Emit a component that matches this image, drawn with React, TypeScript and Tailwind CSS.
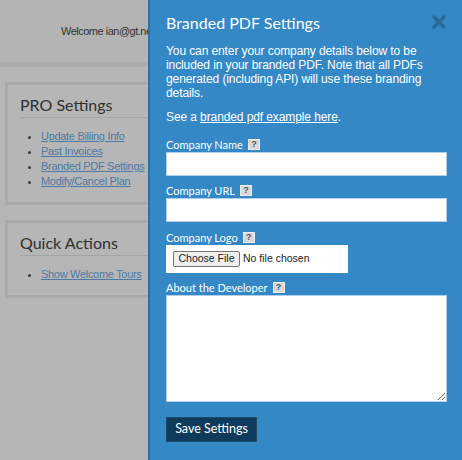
import { X } from "lucide-react";

const proLinks = ["Update Billing Info", "Past Invoices", "Branded PDF Settings", "Modify/Cancel Plan"];

function Help() {
    return (
        <span className="ml-[5px] inline-flex h-[11px] w-[12px] items-center justify-center border border-[#ececec] bg-[#d9d9d9] font-['Liberation_Sans',sans-serif] text-[9px] font-bold leading-none text-[#555]">
            ?
        </span>
    );
}

function Label({ text }: { text: string }) {
    return (
        <div className="flex h-[15px] items-center font-['Lato',sans-serif] text-[11px] leading-[15px] text-white">
            {text}
            <Help />
        </div>
    );
}

function Box({ title, links }: { title: string; links: string[] }) {
    return (
        <div className="ml-[5px] mr-[5px] border-[3px] border-[#a9a9a9] px-[12px] pt-[10px] pb-[13px]">
            <h2 className="border-b border-[#a5a5a5] pb-[2px] font-['Lato',sans-serif] text-[16px] leading-[20px] text-[#303030]">
                {title}
            </h2>
            <ul className="mt-[11px] list-disc pl-[21px] marker:text-[#3a3a3a]">
                {links.map((link) => (
                    <li key={link} className="text-[11px] leading-[15px] tracking-[-0.3px] text-[#4c7aa4]">
                        <a className="underline">{link}</a>
                    </li>
                ))}
            </ul>
        </div>
    );
}

export default function App() {
    return (
        <div className="relative h-[460px] w-[462px] overflow-hidden bg-[#b6b6b6] font-['Liberation_Sans',Arial,sans-serif]">

            {/* Page behind the overlay */}

            <div className="h-[67px] border-b-[5px] border-[#acacac] bg-[#b4b4b4] pl-[61px] pt-[24px] text-[11px] leading-[14px] tracking-[-0.5px] text-[#333]">
                Welcome ian@gt.net
            </div>

            <div className="flex flex-col gap-[15px] pt-[15px]">
                <Box title="PRO Settings" links={proLinks} />
                <Box title="Quick Actions" links={["Show Welcome Tours"]} />
            </div>

            {/* Slide-out panel */}

            <div className="absolute inset-y-0 left-[148px] right-0 border-l-[2px] border-[#2b70a6] bg-[#3388c5] pl-[16px] pr-[15px] text-white">

                <button className="absolute right-[13px] top-[12px] text-[#2c6897]">
                    <X size={20} strokeWidth={4} />
                </button>

                <h1 className="mt-[13px] font-['Lato',sans-serif] text-[16px] leading-[20px]">
                    Branded PDF Settings
                </h1>

                <p className="mt-[11px] text-[12px] leading-[14px] tracking-[-0.1px]">
                    You can enter your company details below to be included in your branded PDF. Note that all PDFs generated (including API) will use these branding details.
                </p>

                <p className="mt-[10px] text-[12px] leading-[14px] tracking-[-0.1px]">
                    See a <a className="underline">branded pdf example here</a>.
                </p>

                <form className="mt-[13px] flex flex-col">
                    <Label text="Company Name" />
                    <input className="h-[24px] w-[281px] border border-[#b4d0e6] bg-white" />

                    <div className="mt-[7px]">
                        <Label text="Company URL" />
                    </div>
                    <input className="h-[24px] w-[281px] border border-[#b4d0e6] bg-white" />

                    <div className="mt-[8px]">
                        <Label text="Company Logo" />
                    </div>
                    <div className="flex h-[28px] w-[182px] items-center gap-[3px] bg-white pl-[7px] text-[10.5px] text-[#222]">
                        <span className="flex h-[16px] w-[67px] items-center justify-center rounded-[2px] border border-[#767676] bg-[#efefef]">
                            Choose File
                        </span>
                        <span>No file chosen</span>
                    </div>

                    <div className="mt-[7px]">
                        <Label text="About the Developer" />
                    </div>
                    <textarea className="h-[107px] w-[281px] resize border border-[#b4d0e6] bg-white" />

                    <button
                        type="button"
                        className="mt-[15px] h-[25px] w-[91px] border border-[#1d4a6b] bg-[#0f3a5b] font-['Lato',sans-serif] text-[12.5px] text-white"
                    >
                        Save Settings
                    </button>
                </form>

            </div>

        </div>
    );
}
